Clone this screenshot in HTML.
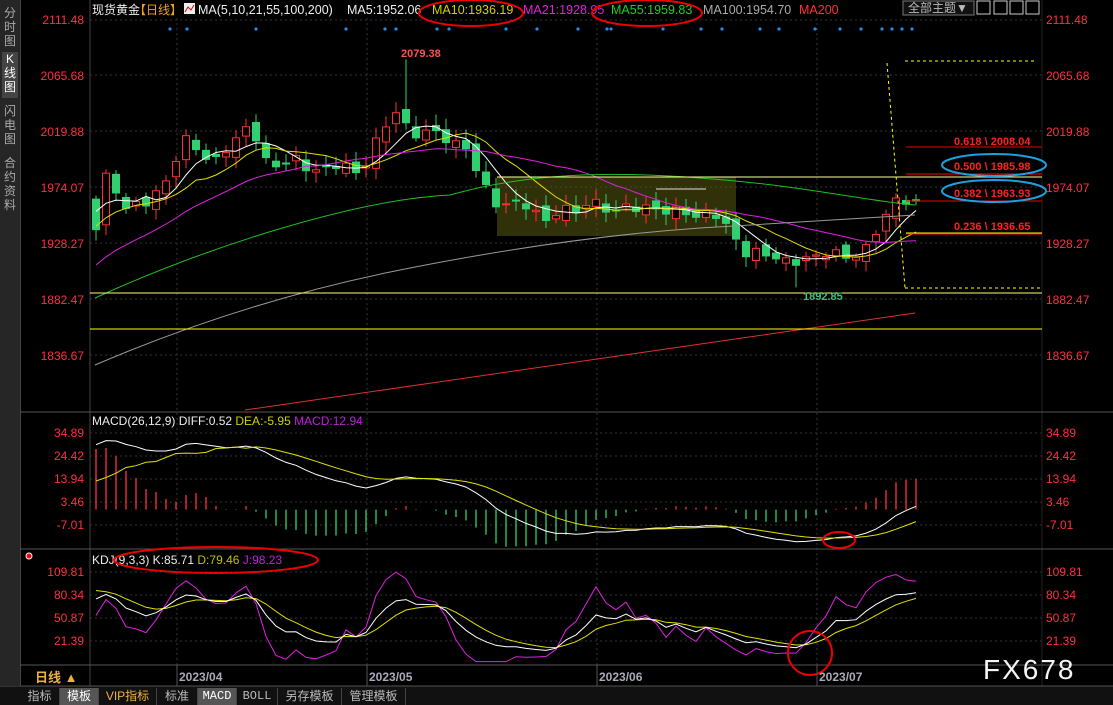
<!DOCTYPE html>
<html><head><meta charset="utf-8">
<style>
html,body{margin:0;padding:0;background:#000;width:1113px;height:704px;overflow:hidden;font-family:"Liberation Sans","Noto Sans CJK SC",sans-serif}
#side{position:absolute;left:0;top:0;width:20px;height:686px;background:#262626;border-right:1px solid #444}
.vt{position:absolute;left:2px;width:16px;color:#aaa;font-size:12px;line-height:14px;text-align:center}
#tabs{position:absolute;left:0;top:686px;width:1113px;height:18px;background:#111;border-top:1px solid #333}
.tb{position:absolute;top:1px;height:17px;font-size:12px;line-height:17px;color:#bbb;text-align:center;border-right:1px solid #444}
svg{position:absolute;left:0;top:0}
</style></head><body>
<div id="side">
<div class="vt" style="top:6px">分<br>时<br>图</div>
<div class="vt" style="top:52px;background:#444;color:#fff;height:46px">K<br>线<br>图</div>
<div class="vt" style="top:104px">闪<br>电<br>图</div>
<div class="vt" style="top:156px">合<br>约<br>资<br>料</div>
</div>
<svg id="s" width="1113" height="704" xmlns="http://www.w3.org/2000/svg" font-family="Liberation Sans, Noto Sans CJK SC, sans-serif">
<g id="grid" stroke="#333" stroke-dasharray="2,3"></g>
<line x1="90" y1="0" x2="90" y2="686" stroke="#444"/>
<line x1="1042" y1="0" x2="1042" y2="686" stroke="#222"/>
<line x1="20" y1="412" x2="1113" y2="412" stroke="#555"/>
<line x1="20" y1="549" x2="1113" y2="549" stroke="#555"/>
<line x1="20" y1="665" x2="1113" y2="665" stroke="#555"/>
<line x1="20" y1="686" x2="1113" y2="686" stroke="#555"/>
<rect x="497" y="177" width="239" height="59" fill="#5a5a10" opacity="0.55"/>
<g id="chart"></g>
<line x1="90" y1="293" x2="1042" y2="293" stroke="#ffff66"/>
<line x1="90" y1="329" x2="1042" y2="329" stroke="#ffff00"/>
<line x1="497" y1="177" x2="1042" y2="177" stroke="#ffff99"/>
<line x1="906" y1="147" x2="1042" y2="147" stroke="#e00"/>
<line x1="906" y1="174" x2="1042" y2="174" stroke="#f00"/>
<line x1="906" y1="201" x2="1042" y2="201" stroke="#e00"/>
<line x1="906" y1="233" x2="1042" y2="233" stroke="#ff0"/>
<line x1="906" y1="234" x2="1042" y2="234" stroke="#f00"/>
<line x1="887" y1="63" x2="905" y2="288" stroke="#ff0" stroke-dasharray="3,3"/>
<line x1="905" y1="61" x2="1035" y2="61" stroke="#ff0" stroke-dasharray="3,3"/>
<line x1="905" y1="288" x2="1042" y2="288" stroke="#ff0" stroke-dasharray="3,3"/>
<g font-size="11" font-weight="bold" fill="#ff2020">
<text x="954" y="145">0.618 \ 2008.04</text>
<text x="954" y="170">0.500 \ 1985.98</text>
<text x="954" y="197">0.382 \ 1963.93</text>
<text x="954" y="230">0.236 \ 1936.65</text>
<text x="401" y="57" fill="#ff5050">2079.38</text>
<text x="803" y="300" fill="#40c080">1892.85</text>
</g>
<ellipse cx="994" cy="165" rx="52" ry="11" fill="none" stroke="#1ea0e0" stroke-width="2"/>
<ellipse cx="994" cy="191" rx="52" ry="11" fill="none" stroke="#1ea0e0" stroke-width="2"/>
<g font-size="12" fill="#ff3040" text-anchor="end">
<text x="84" y="24">2111.48</text><text x="84" y="80">2065.68</text><text x="84" y="136">2019.88</text><text x="84" y="192">1974.07</text><text x="84" y="248">1928.27</text><text x="84" y="304">1882.47</text><text x="84" y="360">1836.67</text>
<text x="84" y="437">34.89</text><text x="84" y="460">24.42</text><text x="84" y="483">13.94</text><text x="84" y="506">3.46</text><text x="84" y="529">-7.01</text>
<text x="84" y="576">109.81</text><text x="84" y="599">80.34</text><text x="84" y="622">50.87</text><text x="84" y="645">21.39</text>
</g>
<g font-size="12" fill="#ff3040">
<text x="1046" y="24">2111.48</text><text x="1046" y="80">2065.68</text><text x="1046" y="136">2019.88</text><text x="1046" y="192">1974.07</text><text x="1046" y="248">1928.27</text><text x="1046" y="304">1882.47</text><text x="1046" y="360">1836.67</text>
<text x="1046" y="437">34.89</text><text x="1046" y="460">24.42</text><text x="1046" y="483">13.94</text><text x="1046" y="506">3.46</text><text x="1046" y="529">-7.01</text>
<text x="1046" y="576">109.81</text><text x="1046" y="599">80.34</text><text x="1046" y="622">50.87</text><text x="1046" y="645">21.39</text>
</g>
<text y="14" font-size="12"><tspan x="92" fill="#eee">现货黄金</tspan><tspan x="134" fill="#f0a020">【日线】</tspan></text>
<rect x="184" y="3" width="11" height="11" fill="#eee"/><path d="M185 12 L188 7 L191 10 L194 5" stroke="#d00" fill="none"/>
<text y="14" font-size="12.5"><tspan x="198" fill="#eee">MA(5,10,21,55,100,200)</tspan><tspan x="347" fill="#eee">MA5:1952.06</tspan><tspan x="432" fill="#d0d000">MA10:1936.19</tspan><tspan x="523" fill="#e020e0">MA21:1928.95</tspan><tspan x="611" fill="#20d020">MA55:1959.83</tspan><tspan x="703" fill="#aaa">MA100:1954.70</tspan><tspan x="799" fill="#ff3030">MA200</tspan></text>
<ellipse cx="471" cy="13" rx="52" ry="13" fill="none" stroke="#e00" stroke-width="2"/>
<ellipse cx="647" cy="13" rx="55" ry="13" fill="none" stroke="#e00" stroke-width="2"/>
<rect x="903" y="1" width="71" height="14" fill="#111" stroke="#777"/>
<text x="908" y="12" font-size="12" fill="#bbb">全部主题▼</text>
<g fill="none" stroke="#ccc"><rect x="977" y="1" width="13" height="13"/><rect x="994" y="1" width="13" height="13"/><rect x="1010" y="1" width="13" height="13"/><rect x="1026" y="1" width="13" height="13"/></g>
<g id="dots" fill="#2a8ae0"></g>
<text y="425" font-size="12"><tspan x="92" fill="#eee">MACD(26,12,9) DIFF:0.52 </tspan><tspan fill="#d0d000"> DEA:-5.95 </tspan><tspan fill="#c020e0"> MACD:12.94</tspan></text>
<text y="564" font-size="12"><tspan x="92" fill="#eee">KDJ(9,3,3) K:85.71 </tspan><tspan fill="#c0c000"> D:79.46 </tspan><tspan fill="#c020e0"> J:98.23</tspan></text>
<ellipse cx="216" cy="560" rx="102" ry="13" fill="none" stroke="#e00" stroke-width="2"/>
<circle cx="29" cy="556" r="3" fill="#f00" stroke="#fff"/>
<ellipse cx="839" cy="540" rx="16" ry="8" fill="none" stroke="#e00" stroke-width="2"/>
<circle cx="810" cy="653" r="22" fill="none" stroke="#e00" stroke-width="2"/>
<text x="35" y="682" font-size="13" font-weight="bold" fill="#f0b040">日线 ▲</text>
<line x1="90" y1="665" x2="90" y2="686" stroke="#444"/>
<g font-size="12" font-weight="bold" fill="#aab"><text x="179" y="681">2023/04</text><text x="369" y="681">2023/05</text><text x="599" y="681">2023/06</text><text x="819" y="681">2023/07</text></g>
<g stroke="#555"><line x1="177" y1="665" x2="177" y2="686"/><line x1="367" y1="665" x2="367" y2="686"/><line x1="597" y1="665" x2="597" y2="686"/><line x1="817" y1="665" x2="817" y2="686"/></g>
<text x="983" y="679" font-size="28" fill="#f4f4f4" letter-spacing="2">FX678</text>
</svg>
<div id="tabs">
<div class="tb" style="left:20px;width:39px">指标</div>
<div class="tb" style="left:60px;width:38px;background:#555;color:#fff">模板</div>
<div class="tb" style="left:99px;width:57px;color:#f0b040">VIP指标</div>
<div class="tb" style="left:157px;width:40px">标准</div>
<div class="tb" style="left:198px;width:38px;background:#555;color:#fff;font-family:'Liberation Mono',monospace">MACD</div>
<div class="tb" style="left:237px;width:40px;font-family:'Liberation Mono',monospace">BOLL</div>
<div class="tb" style="left:278px;width:63px">另存模板</div>
<div class="tb" style="left:342px;width:63px">管理模板</div>
</div>
<script>
var NS="http://www.w3.org/2000/svg";
function el(p,t,a){var e=document.createElementNS(NS,t);for(var k in a)e.setAttribute(k,a[k]);p.appendChild(e);return e;}
var g=document.getElementById('chart'),gr=document.getElementById('grid'),dt=document.getElementById('dots');
[20,75,131,187,243,299,355,433,456,479,502,525,572,595,618,641].forEach(function(y){el(gr,'line',{x1:90,y1:y,x2:1042,y2:y});});
[177,367,597,817].forEach(function(x){el(gr,'line',{x1:x,y1:18,x2:x,y2:665});});
[170,187,256,346,385,396,437,449,506,537,578,607,611,663,701,722,760,779,815,840,861,882,892,902,912].forEach(function(x){el(dt,'circle',{cx:x,cy:29,r:1.6});});
var kf=[[97,1945],[105,1985],[115,1975],[125,1955],[140,1965],[150,1960],[160,1975],[170,1985],[180,2005],[190,2020],[200,2000],[210,1995],[220,2000],[230,2010],[240,2015],[250,2030],[260,2005],[270,1990],[280,1995],[290,1995],[300,2000],[310,1985],[320,1990],[330,1990],[340,1995],[350,1990],[360,1985],[370,2000],[380,2020],[390,2030],[400,2040],[410,2015],[420,2020],[430,2020],[440,2020],[450,2010],[460,2010],[470,2005],[480,1980],[490,1970],[500,1955],[510,1965],[520,1960],[530,1960],[540,1950],[550,1945],[560,1960],[570,1955],[580,1955],[590,1965],[600,1960],[610,1955],[620,1955],[630,1962],[640,1955],[650,1960],[660,1955],[670,1955],[680,1957],[690,1952],[700,1950],[710,1955],[720,1950],[730,1940],[740,1925],[750,1918],[760,1925],[770,1915],[780,1920],[790,1910],[800,1915],[810,1920],[820,1915],[830,1925],[840,1920],[850,1913],[860,1925],[870,1925],[880,1945],[890,1960],[900,1965],[910,1962],[916,1963]];
function interp(x){for(var i=1;i<kf.length;i++)if(x<=kf[i][0]){var a=kf[i-1],b=kf[i];return a[1]+(b[1]-a[1])*(x-a[0])/(b[0]-a[0]);}return kf[kf.length-1][1];}
var N=83,X0=96,DX=10,pre=50,cl=[],xs=[];
for(var i=0;i<pre;i++){var v=i<25?1820:1820+(i-25)*6.2;cl.push(v+Math.sin(i)*4);}
for(var i=0;i<N;i++){var x=X0+i*DX;xs.push(x);cl.push(interp(x)+Math.sin(i*2.3)*3);}
function Y(p){return 20+(2111.48-p)*1.2227;}
for(var i=0;i<N;i++){var j=pre+i,c=cl[j],o=cl[j-1]+Math.sin(i*1.7)*4,h=Math.max(o,c)+3+Math.abs(Math.sin(i*3.1))*6,l=Math.min(o,c)-3-Math.abs(Math.cos(i*2.7))*6;
if(i==31){h=2079.38;}if(i==70){l=1892.85;}
var up=c>=o,col=up?'#ff3030':'#30d070',x=xs[i];
el(g,'line',{x1:x,y1:Y(h),x2:x,y2:Y(l),stroke:col});
var yt=Y(Math.max(o,c)),hh=Math.max(1,Math.abs(Y(o)-Y(c)));
el(g,'rect',{x:x-3.5,y:yt,width:7,height:hh,fill:up?'#000':col,stroke:col});}
function ma(n){var pts=[];for(var i=0;i<N;i++){var j=pre+i,s=0;for(var k=0;k<n;k++)s+=cl[Math.max(0,j-k)];pts.push(xs[i]+','+Y(s/n).toFixed(1));}return pts.join(' ');}
el(g,'polyline',{points:ma(5),fill:'none',stroke:'#fff'});
el(g,'polyline',{points:ma(10),fill:'none',stroke:'#e0e000'});
el(g,'polyline',{points:ma(21),fill:'none',stroke:'#e020e0'});
el(g,'path',{d:'M95 298 C200 250 350 200 450 195 C520 175 600 170 700 178 C800 185 860 200 915 205',fill:'none',stroke:'#20c020'});
el(g,'path',{d:'M95 365 C200 320 300 290 400 270 C500 250 600 235 700 228 C800 222 860 218 915 215',fill:'none',stroke:'#999'});
el(g,'line',{x1:245,y1:410,x2:915,y2:313,stroke:'#e03030'});
el(g,'line',{x1:656,y1:189,x2:706,y2:189,stroke:'#ddd'});
function ema(a,n){var r=[a[0]],k=2/(n+1);for(var i=1;i<a.length;i++)r.push(a[i]*k+r[i-1]*(1-k));return r;}
var e12=ema(cl,12),e26=ema(cl,26),dif=cl.map(function(_,i){return e12[i]-e26[i];}),dea=ema(dif,9);
function MY(v){return 509.6-v*2.197;}
var hy=[449,448,456,471,478,489,492,499,502,495,493,497,506,509,510,506];
var pd=[],pe=[];
for(var i=0;i<N;i++){var j=pre+i,m=2*(dif[j]-dea[j]);m=Math.max(-17,Math.min(17,m));
var dv=dea[j];
if(i<hy.length){m=(509.6-hy[i])/2.197;var dd=dif[j]-m*0.6;dv=dd;}
else if(i<hy.length+4){dv=dea[j];}
el(g,'line',{x1:xs[i],y1:509.6,x2:xs[i],y2:MY(m),stroke:m>=0?'#ff3040':'#30d070','stroke-width':1.3});
pd.push(xs[i]+','+MY(dif[j]).toFixed(1));pe.push(xs[i]+','+MY(dv).toFixed(1));}
el(g,'polyline',{points:pd.join(' '),fill:'none',stroke:'#fff'});
el(g,'polyline',{points:pe.join(' '),fill:'none',stroke:'#e0e000'});
var K=50,D=50,pk=[],pdd=[],pj=[];
function KY(v){v=Math.max(-5,Math.min(118,v));return 641-(v-21.39)*0.7805;}
for(var j=1;j<cl.length;j++){var hi=-1e9,lo=1e9;for(var k=Math.max(0,j-8);k<=j;k++){hi=Math.max(hi,cl[k]+5);lo=Math.min(lo,cl[k]-5);}
var rsv=(cl[j]-lo)/(hi-lo)*100;K=(2*K+rsv)/3;D=(2*D+K)/3;var J=3*K-2*D;
var i=j-pre;if(i>=0){pk.push(xs[i]+','+KY(K).toFixed(1));pdd.push(xs[i]+','+KY(D).toFixed(1));pj.push(xs[i]+','+KY(J).toFixed(1));}}
el(g,'polyline',{points:pj.join(' '),fill:'none',stroke:'#e020e0'});
el(g,'polyline',{points:pdd.join(' '),fill:'none',stroke:'#e0e000'});
el(g,'polyline',{points:pk.join(' '),fill:'none',stroke:'#fff'});
</script>
</body></html>
